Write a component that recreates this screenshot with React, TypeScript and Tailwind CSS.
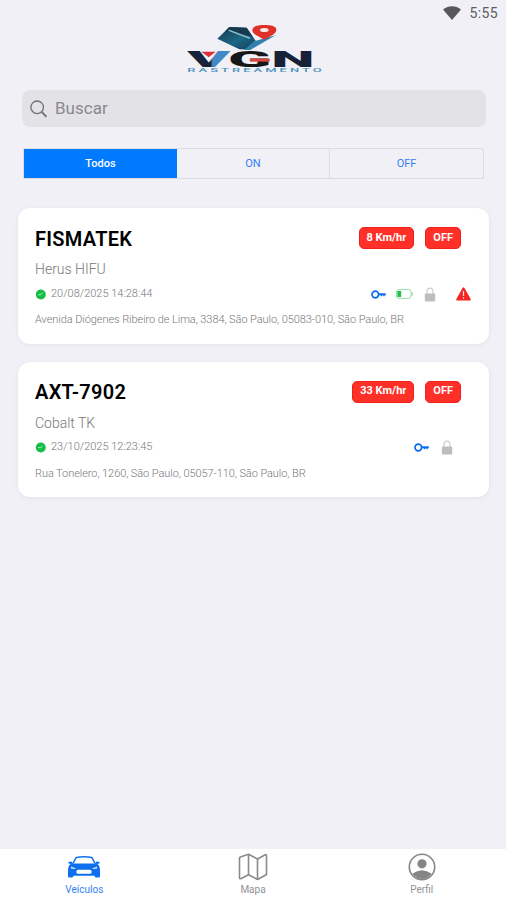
import { useState } from 'react';
import type { ReactNode } from 'react';

interface Vehicle {
  plate: string;
  model: string;
  speed: string;
  updatedAt: string;
  address: string;
  battery: boolean;
  alert: boolean;
}

const vehicles: Vehicle[] = [
  {
    plate: 'FISMATEK',
    model: 'Herus HIFU',
    speed: '8 Km/hr',
    updatedAt: '20/08/2025 14:28:44',
    address: 'Avenida Diógenes Ribeiro de Lima, 3384, São Paulo, 05083-010, São Paulo, BR',
    battery: true,
    alert: true,
  },
  {
    plate: 'AXT-7902',
    model: 'Cobalt TK',
    speed: '33 Km/hr',
    updatedAt: '23/10/2025 12:23:45',
    address: 'Rua Tonelero, 1260, São Paulo, 05057-110, São Paulo, BR',
    battery: false,
    alert: false,
  },
];

const filters = ['Todos', 'ON', 'OFF'];

function Logo() {
  return (
    <svg width="156" height="64" viewBox="0 0 468 192" fontFamily="Roboto, sans-serif">
      <defs>
        <linearGradient id="vee" x1="0" x2="1" y1="0" y2="0">
          <stop offset="0.55" stopColor="#16233a" />
          <stop offset="0.6" stopColor="#4389c4" />
        </linearGradient>
        <linearGradient id="check" x1="0" x2="1" y1="0" y2="1">
          <stop offset="0" stopColor="#17384f" />
          <stop offset="0.55" stopColor="#1d6685" />
          <stop offset="1" stopColor="#123d59" />
        </linearGradient>
      </defs>
      <path d="M160 33 L212 35 L244 82 L221 101 L190 100 L124 68 Z" fill="url(#check)" />
      <path d="M160 33 L212 35 L230 62 L148 46 Z" fill="#17394f" />
      <path d="M158 43 L222 67" stroke="#84b9c9" strokeWidth="5" />
      <path d="M234 76 L299 58 L224 101 L205 101 Z" fill="#2e82ad" />
      <path d="M265 71 C244 59 228 53 229 42 C231 29 246 27 265 27 C286 27 301 31 301 41 C301 53 283 60 265 71 Z" fill="#df3029" />
      <ellipse cx="265" cy="42" rx="13" ry="6" fill="#f5e9e9" />
      <g fontWeight="900" fontSize="66">
        <text x="34" y="153" textLength="129" lengthAdjust="spacingAndGlyphs" fill="url(#vee)">V</text>
        <text x="156" y="153" textLength="130" lengthAdjust="spacingAndGlyphs" fill="#171719">G</text>
        <text x="286" y="153" textLength="130" lengthAdjust="spacingAndGlyphs" fill="#172238">N</text>
      </g>
      <path d="M76 107 H119 L98 124 Z" fill="#dc3034" />
      <path d="M222 128 H281 V137 H222 Z" fill="#dc4540" />
      {/* the tagline is set very wide and flat */}
      <text
        transform="translate(34 168) scale(2.6 1)"
        fontSize="15"
        fontWeight="500"
        textLength="155"
        lengthAdjust="spacing"
        fill="#4d93bd"
      >
        RASTREAMENTO
      </text>
    </svg>
  );
}

function WifiIcon() {
  return (
    <svg width="18" height="14" viewBox="0 0 18 14">
      <path d="M0 3.6 C5 -1 13 -1 18 3.6 L9 14 Z" fill="#58585b" />
    </svg>
  );
}

function SearchIcon() {
  return (
    <svg width="18" height="18" viewBox="0 0 18 18" fill="none" stroke="#707075">
      <circle cx="7.2" cy="7.3" r="6.3" strokeWidth="1.3" />
      <path d="M11.8 12 L16.5 16.8" strokeWidth="1.8" />
    </svg>
  );
}

function ClockIcon() {
  return (
    <svg width="11" height="11" viewBox="0 0 11 11">
      <circle cx="5.8" cy="5.5" r="5" fill="#16bd45" />
      <path d="M3 5.7 H5.8 L7.5 3.7" fill="none" stroke="#a8edbb" strokeWidth="1" />
    </svg>
  );
}

function KeyIcon() {
  return (
    <svg width="15" height="9" viewBox="0 0 15 9" fill="none" stroke="#086cf0">
      <circle cx="4.3" cy="4.5" r="3.3" strokeWidth="1.7" />
      <path d="M7.5 4.3 H14.8" strokeWidth="2" />
      <path d="M10.5 4.5 V6.2 M13 4.5 V6.2" strokeWidth="1.3" />
    </svg>
  );
}

function BatteryIcon() {
  return (
    <svg width="17" height="10" viewBox="0 0 17 10">
      <rect x="0.5" y="0.6" width="14.6" height="8.8" rx="2.4" fill="none" stroke="#8fdfa5" />
      <rect x="1.4" y="2" width="3.8" height="6" rx="0.6" fill="#20bf47" />
      <path d="M16.2 3.3 V6.7" stroke="#79d894" />
    </svg>
  );
}

function LockIcon() {
  return (
    <svg width="12" height="15" viewBox="0 0 12 15">
      <path d="M3 7 V4.2 C3 0 9 0 9 4.2 V7" fill="none" stroke="#cecece" strokeWidth="1.2" />
      <rect x="0.8" y="6.5" width="10.4" height="8" rx="1.2" fill="#bdbdbd" />
    </svg>
  );
}

function AlertIcon() {
  return (
    <svg width="15" height="14" viewBox="0 0 15 14">
      <path d="M6.7 0.7 Q7.5 -0.3 8.3 0.7 L14.6 12 Q15 13.5 13.7 13.6 H1.3 Q0 13.5 0.4 12 Z" fill="#f5231f" />
      <path d="M7.5 4 V9 M7.5 10.3 V11.7" stroke="#ffdbd8" strokeWidth="1.3" />
    </svg>
  );
}

function CarIcon() {
  return (
    <svg width="34" height="24" viewBox="0 0 34 24">
      <path d="M6 8.5 L9.2 2.4 Q17 1.2 24.8 2.4 L28 8.5" fill="none" stroke="#0e70ed" strokeWidth="1.5" />
      <path d="M1 7 L4.5 6.5 L6 8.5 H28 L29.5 6.5 L33 7 L32 8.5 L30.5 9 Q33 11 33 14 V21.5 Q33 22.6 31.5 22.6 H29 Q27.5 22.6 27.5 20.8 H6.5 Q6.5 22.6 5 22.6 H2.5 Q1 22.6 1 21.5 V14 Q1 11 3.5 9 L2 8.5 Z" fill="#0e70ed" />
      <path d="M3.8 11.5 L9 13.2 Q7.5 14.7 4 13.7 Z M30.2 11.5 L25 13.2 Q26.5 14.7 30 13.7 Z" fill="#b6d4fb" />
      <rect x="9.5" y="14.8" width="15" height="4" rx="1.5" fill="#fff" />
    </svg>
  );
}

function MapIcon() {
  return (
    <svg width="30" height="28" viewBox="0 0 30 28" fill="none" stroke="#8b8b8d" strokeWidth="1.6" strokeLinejoin="round">
      <path d="M1.5 5.2 Q1.5 4.3 2.3 4 L10.5 1.2 L19.5 6 L27.3 1.7 Q28.5 1.3 28.5 2.8 V21.5 L19.5 26.5 L10.5 21.8 L2.8 25.7 Q1.5 26 1.5 24.5 Z" />
      <path d="M10.5 1.2 V21.8 M19.5 6 V26.5" />
    </svg>
  );
}

function ProfileIcon() {
  return (
    <svg width="28" height="28" viewBox="0 0 28 28">
      <circle cx="14" cy="14" r="12.7" fill="none" stroke="#858587" strokeWidth="1.6" />
      <circle cx="14" cy="10.8" r="4.6" fill="#858587" />
      <path d="M4.3 20.8 Q14 13.6 23.7 20.8 Q19.8 26 14 26 Q8.2 26 4.3 20.8 Z" fill="#858587" />
    </svg>
  );
}

function Badge({ children }: { children: ReactNode }) {
  return (
    <span className="flex h-[22px] items-center rounded-[5px] border border-[#f11e19] bg-[#ff3027] px-[7px] text-[11px] font-bold text-white">
      {children}
    </span>
  );
}

function VehicleCard({ vehicle }: { vehicle: Vehicle }) {
  return (
    <div className="h-[135.5px] rounded-[12px] bg-white pl-[17px] pt-[18px] shadow-[0_1px_5px_rgba(0,0,0,0.06)]">
      <div className="flex h-6 items-center justify-between pr-7">
        <h2 className="pt-px text-[20px] font-semibold leading-6 tracking-[0.28px] text-black">{vehicle.plate}</h2>
        <div className="flex gap-[11px]">
          <Badge>{vehicle.speed}</Badge>
          <Badge>OFF</Badge>
        </div>
      </div>
      <p className="mt-[9px] text-[14px] font-light leading-5 text-[#77777a]">{vehicle.model}</p>
      <div className="mt-[7px] flex h-4 items-center justify-between">
        <div className="flex items-center gap-[5px]">
          <ClockIcon />
          <span className="text-[11px] font-light text-[#77777a]">{vehicle.updatedAt}</span>
        </div>
        <div className={vehicle.alert ? 'flex items-center pr-[18px]' : 'flex items-center pr-[36px]'}>
          <KeyIcon />
          {vehicle.battery && <div className="ml-[10px]"><BatteryIcon /></div>}
          <div className={vehicle.battery ? 'ml-[11px]' : 'ml-[12px]'}><LockIcon /></div>
          {vehicle.alert && <div className="ml-[20px]"><AlertIcon /></div>}
        </div>
      </div>
      <p className="mt-[10px] whitespace-nowrap text-[11px] font-light leading-4 tracking-[-0.07px] text-[#77777a]">
        {vehicle.address}
      </p>
    </div>
  );
}

export default function App() {
  const [filter, setFilter] = useState('Todos');

  return (
    <div className="flex h-[900px] w-[506px] flex-col overflow-hidden bg-[#f1f0f6] font-[Roboto,sans-serif]">
      <header className="relative flex h-[90px] justify-center pl-[2px] pt-4">
        <Logo />
        <div className="absolute right-[8px] top-[5px] flex items-center gap-[8px] text-[14px] leading-4 tracking-[0.4px] text-[#5c5c60]">
          <WifiIcon />
          <span>5:55</span>
        </div>
      </header>

      <div className="ml-[22px] mr-5 flex h-[37px] items-center gap-[7px] rounded-[8px] bg-[#e3e2e7] pl-2">
        <SearchIcon />
        <input
          className="w-96 bg-transparent text-[17px] outline-none placeholder:text-[#89898e]"
          placeholder="Buscar"
        />
      </div>

      <div className="ml-[23px] mr-[22px] mt-[21px] grid h-[31px] grid-cols-3 rounded-[2px] border border-[#dcdbe2]">
        {filters.map((item) => (
          <button
            key={item}
            onClick={() => setFilter(item)}
            className={
              item === filter
                ? 'bg-[#007aff] pt-px text-[11px] font-medium text-white'
                : 'border-r border-[#dcdbe2] pt-px text-[11px] text-[#347ff6] last:border-r-0'
            }
          >
            {item}
          </button>
        ))}
      </div>

      <main className="flex flex-1 flex-col gap-[18px] pl-[18px] pr-[17px] pt-[29px]">
        {vehicles.map((vehicle) => (
          <VehicleCard key={vehicle.plate} vehicle={vehicle} />
        ))}
      </main>

      <nav className="grid h-[51px] grid-cols-3 bg-white text-[10px] leading-3 text-[#929294]">
        <div className="flex flex-col items-center">
          <div className="flex h-[35px] items-center"><CarIcon /></div>
          <span className="text-[#347ff6]">Veículos</span>
        </div>
        <div className="flex flex-col items-center">
          <div className="flex h-[35px] items-center"><MapIcon /></div>
          <span>Mapa</span>
        </div>
        <div className="flex flex-col items-center">
          <div className="flex h-[35px] items-center"><ProfileIcon /></div>
          <span>Perfil</span>
        </div>
      </nav>
    </div>
  );
}
